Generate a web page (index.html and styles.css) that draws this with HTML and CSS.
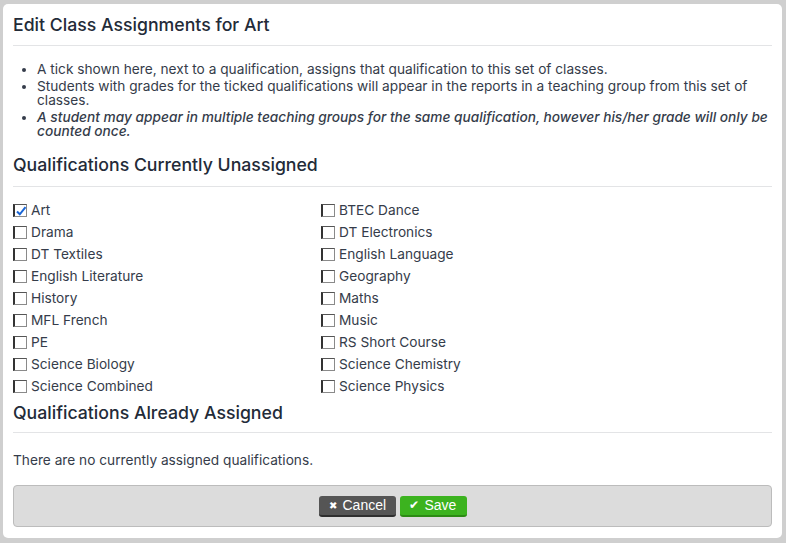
FILE: index.html
```html
<!DOCTYPE html>
<html>
<head>
<meta charset="utf-8">
<link rel="stylesheet" href="styles.css">
</head>
<body>
<div class="dialog">
  <h1 class="title">Edit Class Assignments for Art</h1>
  <ul class="notes">
    <li>A tick shown here, next to a qualification, assigns that qualification to this set of classes.</li>
    <li>Students with grades for the ticked qualifications will appear in the reports in a teaching group from this set of classes.</li>
    <li class="em">A student may appear in multiple teaching groups for the same qualification, however his/her grade will only be counted once.</li>
  </ul>
  <h2 class="section">Qualifications Currently Unassigned</h2>
  <div class="quals">
    <label class="qual"><span class="box checked"><svg viewBox="0 0 12 12" width="12" height="12"><path d="M2 6.5 L4.8 9.3 L10.5 2.2" fill="none" stroke="#1a66d6" stroke-width="2"/></svg></span>Art</label>
    <label class="qual"><span class="box"></span>BTEC Dance</label>
    <label class="qual"><span class="box"></span>Drama</label>
    <label class="qual"><span class="box"></span>DT Electronics</label>
    <label class="qual"><span class="box"></span>DT Textiles</label>
    <label class="qual"><span class="box"></span>English Language</label>
    <label class="qual"><span class="box"></span>English Literature</label>
    <label class="qual"><span class="box"></span>Geography</label>
    <label class="qual"><span class="box"></span>History</label>
    <label class="qual"><span class="box"></span>Maths</label>
    <label class="qual"><span class="box"></span>MFL French</label>
    <label class="qual"><span class="box"></span>Music</label>
    <label class="qual"><span class="box"></span>PE</label>
    <label class="qual"><span class="box"></span>RS Short Course</label>
    <label class="qual"><span class="box"></span>Science Biology</label>
    <label class="qual"><span class="box"></span>Science Chemistry</label>
    <label class="qual"><span class="box"></span>Science Combined</label>
    <label class="qual"><span class="box"></span>Science Physics</label>
  </div>
  <h2 class="section second">Qualifications Already Assigned</h2>
  <p class="empty">There are no currently assigned qualifications.</p>
  <div class="footer">
    <button class="btn cancel"><span class="ico x">&#10006;</span>Cancel</button>
    <button class="btn save"><span class="ico tick">&#10004;</span>Save</button>
  </div>
</div>
</body>
</html>
```
FILE: styles.css
```css
html, body {
  margin: 0;
  padding: 0;
  background: #cfcfcf;
  overflow: hidden;
}
body {
  width: 786px;
  height: 543px;
  font-family: Inter, "Noto Sans", sans-serif;
  color: #2f3644;
}
.dialog {
  margin: 4px 4px 0 3px;
  width: 779px;
  height: 534px;
  box-sizing: border-box;
  background: #fff;
  border-radius: 5px;
  padding: 10px 10px 0 10px;
}
.title {
  margin: 0;
  font-size: 17.7px;
  line-height: 22px;
  font-weight: 500;
  color: #232b38;
  padding-bottom: 9px;
  border-bottom: 1px solid #e3e4e6;
}
.notes {
  margin: 16px 0 0 0;
  padding: 0 0 0 24px;
  font-size: 13.7px;
  line-height: 14px;
  color: #353c4a;
}
.notes li {
  margin-bottom: 3px;
}
.notes li:last-child { margin-bottom: 0; }
.notes .em {
  font-style: italic;
  font-weight: 500;
}
.section {
  margin: 16px 0 0 0;
  font-size: 17.7px;
  line-height: 22px;
  font-weight: 500;
  color: #232b38;
  padding-bottom: 10px;
  border-bottom: 1px solid #e3e4e6;
}
.section.second {
  margin-top: 5px;
  padding-bottom: 8px;
}
.quals {
  margin-top: 12px;
  display: grid;
  grid-template-columns: 308px 1fr;
  grid-auto-rows: 22px;
}
.qual {
  display: flex;
  align-items: center;
  font-size: 13.7px;
  color: #353c4a;
}
.box {
  width: 11px;
  height: 11px;
  border-style: solid;
  border-width: 1px 1px 1px 2px;
  border-color: #555 #8a8a8a #8a8a8a #333;
  background: #fff;
  margin-right: 4px;
  position: relative;
  flex: none;
}
.box svg {
  position: absolute;
  left: 0;
  top: 0;
}
.empty {
  margin: 17px 0 0 0;
  font-size: 13.7px;
  line-height: 20px;
  color: #353c4a;
}
.footer {
  margin-top: 15px;
  height: 40px;
  background: #dcdcdc;
  border: 1px solid #bcbcbc;
  border-radius: 4px;
  display: flex;
  justify-content: center;
  align-items: center;
  gap: 4px;
}
.btn {
  font-family: "Liberation Sans", Arial, sans-serif;
  font-size: 14px;
  color: #fff;
  border: none;
  border-radius: 3px;
  height: 21px;
  padding: 0 8px 0 10px;
  display: flex;
  align-items: center;
  cursor: pointer;
}
.btn .ico {
  margin-right: 6px;
}
.btn .x {
  font-size: 10px;
}
.btn .tick {
  font-size: 12px;
  margin-left: -1px;
}
.cancel {
  width: 77px;
  background: #555555;
  border-bottom: 2px solid #2e2e2e;
}
.save {
  width: 67px;
  background: #3cb31f;
  border-bottom: 2px solid #2c8a14;
}
```
